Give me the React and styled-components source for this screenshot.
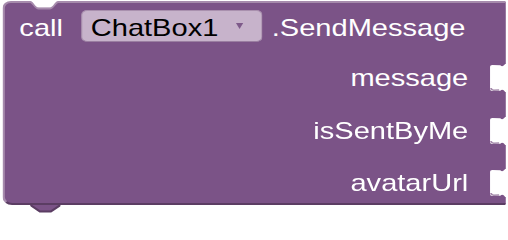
import React from 'react'
import styled, { createGlobalStyle } from 'styled-components'

const GlobalStyle = createGlobalStyle`
  body {
    margin: 0;
    background: #ffffff;
    font-family: "Liberation Sans", Arial, sans-serif;
  }
`

const PURPLE = '#7b5387'
const LIGHT = '#a68bac'
const DARK = '#5b3d63'

// the reference is stretched sideways, so the whole block is too
const Stage = styled.div`
  width: 420px;
  padding: 1px 0 0 2px;
  transform: scaleX(1.21);
  transform-origin: 0 0;
`

const Block = styled.div`
  position: relative;
  box-sizing: border-box;
  width: 416px;
  display: flex;
  flex-direction: column;
  gap: 23px;
  padding: 7px 0;
  background: ${PURPLE};
  border-top: 2px solid ${LIGHT};
  border-left: 2px solid ${LIGHT};
  border-bottom: 2px solid ${DARK};
  border-radius: 7px 0 0 8px;
`

const Header = styled.div`
  display: flex;
  align-items: center;
  height: 32px;
  padding-left: 12px;
`

const Word = styled.span`
  font-size: 24px;
  line-height: 28px;
  padding-top: 4px;
  color: ${p => (p.$dark ? '#000000' : '#ffffff')};
  margin-left: ${p => p.$left || 0}px;
  margin-right: ${p => p.$right || 0}px;
  white-space: nowrap;
`

const Dropdown = styled.div`
  box-sizing: border-box;
  width: 150px;
  height: 32px;
  display: flex;
  align-items: center;
  padding-left: 7px;
  background: #c7b3cb;
  border: 1px solid #a990ae;
  border-bottom-color: #9a7ea1;
  border-radius: 5px;
`

const Arrow = styled.span`
  width: 0;
  height: 0;
  margin-left: 14.5px;
  border-left: 3.5px solid transparent;
  border-right: 3.5px solid transparent;
  border-top: 6.5px solid #7e5a8a;
`

const Inputs = styled.div`
  display: flex;
  flex-direction: column;
  gap: 26.5px;
`

const InputRow = styled.div`
  display: flex;
  justify-content: flex-end;
  align-items: flex-start;
  height: 26px;
`

const InputLabel = styled.span`
  font-size: 24px;
  line-height: 26px;
  color: #ffffff;
  margin-right: 18px;
`

const Notch = styled.svg`
  position: absolute;
  top: -2px;
  left: 21px;
  display: block;
`

// the connector tab hanging under the block
const Tab = styled.svg`
  display: block;
  margin: -2px 0 0 23px;
`

const SocketIcon = styled.svg`
  flex: none;
  display: block;
  overflow: visible;
`

const Socket = () => (
  <SocketIcon width="13" height="26" viewBox="0 0 13 26">
    <path
      d="M14 -1 L12.5 -1 Q10.5 2.5 8.5 0.3 L1.8 0 Q0 0 0 1.8 L0 24.2 Q0 26 1.8 26 L8.5 25.7 Q10.5 23.5 12.5 27 L14 27 Z"
      fill="#ffffff"
    />
    <path d="M0.8 23 Q1 25 3 25.2 L7.5 25" stroke={LIGHT} strokeWidth="1.5" fill="none" />
  </SocketIcon>
)

const inputs = ['message', 'isSentByMe', 'avatarUrl']

export default function App() {
  return (
    <>
      <GlobalStyle />
      <Stage>
        <Block>
          <Notch width="23" height="9" viewBox="0 0 23 9">
            <path d="M0 1 C2.5 1 4 7.5 7 7.5 L16 7.5 C19 7.5 20.5 1 23 1" stroke={LIGHT} strokeWidth="2" fill="none" />
            <path d="M0 0 C2.5 0 4 6.5 7 6.5 L16 6.5 C19 6.5 20.5 0 23 0 Z" fill="#ffffff" />
          </Notch>
          <Header>
            <Word $right={15}>call</Word>
            <Dropdown>
              <Word $dark>ChatBox1</Word>
              <Arrow />
            </Dropdown>
            <Word $left={7.6}>.SendMessage</Word>
          </Header>
          <Inputs>
            {inputs.map(name => (
              <InputRow key={name}>
                <InputLabel>{name}</InputLabel>
                <Socket />
              </InputRow>
            ))}
          </Inputs>
        </Block>
        <Tab width="25" height="10" viewBox="0 0 25 10">
          <path d="M0 0 L25 0 L25 2 L17 8.5 L8 8.5 L0 2 Z" fill={PURPLE} />
          <path d="M0 2 L8 8.5 L17 8.5 L25 2" stroke={DARK} strokeWidth="2" fill="none" />
        </Tab>
      </Stage>
    </>
  )
}
